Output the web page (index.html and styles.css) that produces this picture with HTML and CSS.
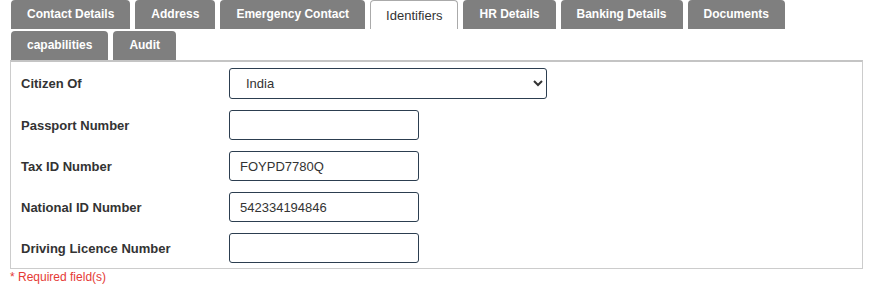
FILE: index.html
```html
<!DOCTYPE html>
<html>
<head>
    <title>Employee - Identifiers</title>
    <link rel="stylesheet" href="styles.css">
</head>
<body>
    <div class="tabs">
        <a class="tab">Contact Details</a>
        <a class="tab">Address</a>
        <a class="tab">Emergency Contact</a>
        <a class="tab active">Identifiers</a>
        <a class="tab">HR Details</a>
        <a class="tab">Banking Details</a>
        <a class="tab">Documents</a>
        <a class="tab">capabilities</a>
        <a class="tab">Audit</a>
    </div>

    <form class="panel">
        <label for="citizenSelect">Citizen Of</label>
        <div>
            <select id="citizenSelect" class="field field-select">
                <option>India</option>
            </select>
        </div>

        <label for="passportInput">Passport Number</label>
        <div><input type="text" id="passportInput" class="field"></div>

        <label for="taxInput">Tax ID Number</label>
        <div><input type="text" id="taxInput" class="field" value="FOYPD7780Q"></div>

        <label for="nationalInput">National ID Number</label>
        <div><input type="text" id="nationalInput" class="field" value="542334194846"></div>

        <label for="licenceInput">Driving Licence Number</label>
        <div><input type="text" id="licenceInput" class="field"></div>
    </form>

    <p class="required">* Required field(s)</p>
</body>
</html>
```

FILE: styles.css
```css
body {
    font-family: "Liberation Sans", Arial, sans-serif;
    margin: 0 9px 0 10px;
    color: #333;
}
.tabs {
    display: flex;
    flex-wrap: wrap;
    column-gap: 5px;
    row-gap: 2px;
    padding-left: 1px;
    width: 790px;
}
.tab {
    display: block;
    height: 29px;
    line-height: 29px;
    padding: 0 16px;
    background-color: #7f7f7f;
    color: #fff;
    font-size: 12px;
    font-weight: bold;
    border-radius: 4px 4px 0 0;
    box-sizing: border-box;
}
.tab.active {
    background-color: #fff;
    color: #333;
    font-size: 13px;
    font-weight: normal;
    border: 1px solid #aaa;
    border-bottom: none;
    padding: 0 15px;
}
.panel {
    display: grid;
    grid-template-columns: 208px 1fr;
    row-gap: 11px;
    align-items: center;
    border: 1px solid #ccc;
    border-top: 2px solid #c4c4c4;
    padding: 6px 10px 5px 10px;
    margin: 0;
}
.panel label {
    font-size: 13px;
    font-weight: bold;
    color: #333;
}
.field {
    display: block;
    width: 190px;
    height: 30px;
    box-sizing: border-box;
    border: 1px solid #2c3e50;
    border-radius: 3px;
    padding: 0 10px;
    font-family: "Liberation Sans", Arial, sans-serif;
    font-size: 13px;
    color: #333;
    background-color: #fff;
    margin: 0;
}
.field-select {
    width: 318px;
    height: 31px;
    padding-left: 12px;
}
.required {
    margin: 1px 0 0 0;
    font-size: 12px;
    color: #e53935;
}
```
